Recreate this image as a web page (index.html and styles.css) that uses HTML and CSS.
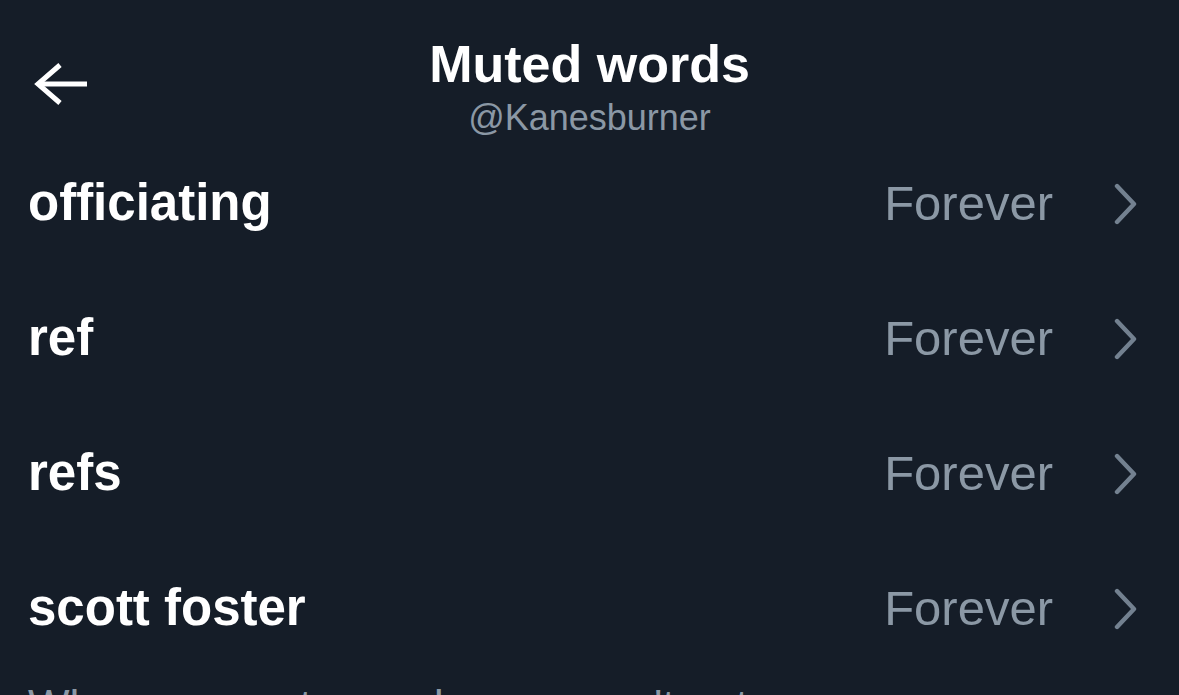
FILE: index.html
```html
<!DOCTYPE html>
<html lang="en">
<head>
<meta charset="utf-8">
<title>Muted words</title>
<link rel="stylesheet" href="styles.css">
</head>
<body>
<div class="screen">
  <header class="header">
    <div class="back">
      <svg class="back-icon" width="56" height="48" viewBox="0 0 56 48" aria-hidden="true">
        <path d="M27 4 L5 23 L27 42" fill="none" stroke="#ffffff" stroke-width="5" stroke-linecap="butt" stroke-linejoin="miter"/>
        <path d="M6 23 H54" fill="none" stroke="#ffffff" stroke-width="5"/>
      </svg>
    </div>
    <div class="titles">
      <div class="title">Muted words</div>
      <div class="subtitle">@Kanesburner</div>
    </div>
    <div class="spacer"></div>
  </header>
  <ul class="list">
    <li class="row"><span class="word">officiating</span><span class="meta"><span class="duration">Forever</span><svg class="chev" width="26" height="42" viewBox="0 0 26 42" aria-hidden="true"><path d="M4 3 L21 21 L4 39" fill="none" stroke="#738190" stroke-width="4.4" stroke-linecap="round" stroke-linejoin="round"/></svg></span></li>
    <li class="row"><span class="word">ref</span><span class="meta"><span class="duration">Forever</span><svg class="chev" width="26" height="42" viewBox="0 0 26 42" aria-hidden="true"><path d="M4 3 L21 21 L4 39" fill="none" stroke="#738190" stroke-width="4.4" stroke-linecap="round" stroke-linejoin="round"/></svg></span></li>
    <li class="row"><span class="word">refs</span><span class="meta"><span class="duration">Forever</span><svg class="chev" width="26" height="42" viewBox="0 0 26 42" aria-hidden="true"><path d="M4 3 L21 21 L4 39" fill="none" stroke="#738190" stroke-width="4.4" stroke-linecap="round" stroke-linejoin="round"/></svg></span></li>
    <li class="row"><span class="word">scott foster</span><span class="meta"><span class="duration">Forever</span><svg class="chev" width="26" height="42" viewBox="0 0 26 42" aria-hidden="true"><path d="M4 3 L21 21 L4 39" fill="none" stroke="#738190" stroke-width="4.4" stroke-linecap="round" stroke-linejoin="round"/></svg></span></li>
  </ul>
  <p class="note">When you mute words, you won't get any new notifications for Tweets that include them or see Tweets with those words in your timeline.</p>
</div>
</body>
</html>
```

FILE: styles.css
```css
* { box-sizing: border-box; }
html, body {
  margin: 0;
  padding: 0;
  background: #151d28;
  height: 100%;
  overflow: hidden;
}
body {
  font-family: "Liberation Sans", Arial, sans-serif;
  color: #ffffff;
}
.screen {
  width: 1179px;
  height: 695px;
  overflow: hidden;
  background: #151d28;
}
.header {
  height: 135px;
  display: grid;
  grid-template-columns: 1fr auto 1fr;
  align-items: center;
  padding-top: 36px;
}
.back {
  padding-left: 33px;
  display: flex;
  align-items: center;
  margin-top: -2px;
}
.back-icon { display: block; }
.titles {
  display: flex;
  flex-direction: column;
  align-items: center;
  gap: 8px;
}
.title {
  font-size: 52px;
  font-weight: 700;
  line-height: 56px;
  color: #ffffff;
}
.subtitle {
  font-size: 36px;
  line-height: 36px;
  color: #8b98a5;
}
.list {
  list-style: none;
  margin: 0;
  padding: 0;
}
.row {
  height: 135px;
  display: flex;
  align-items: center;
  justify-content: space-between;
  padding: 0 40px 0 28px;
}
.word {
  font-size: 51px;
  font-weight: 700;
  line-height: 60px;
  color: #ffffff;
}
.meta {
  display: flex;
  align-items: center;
  gap: 60px;
}
.duration {
  font-size: 49px;
  line-height: 60px;
  color: #8b98a5;
}
.chev { display: block; margin-top: 2px; }
.note {
  margin: 0;
  padding: 5px 28px 0 28px;
  font-size: 44px;
  line-height: 52px;
  color: #8b98a5;
}
```
